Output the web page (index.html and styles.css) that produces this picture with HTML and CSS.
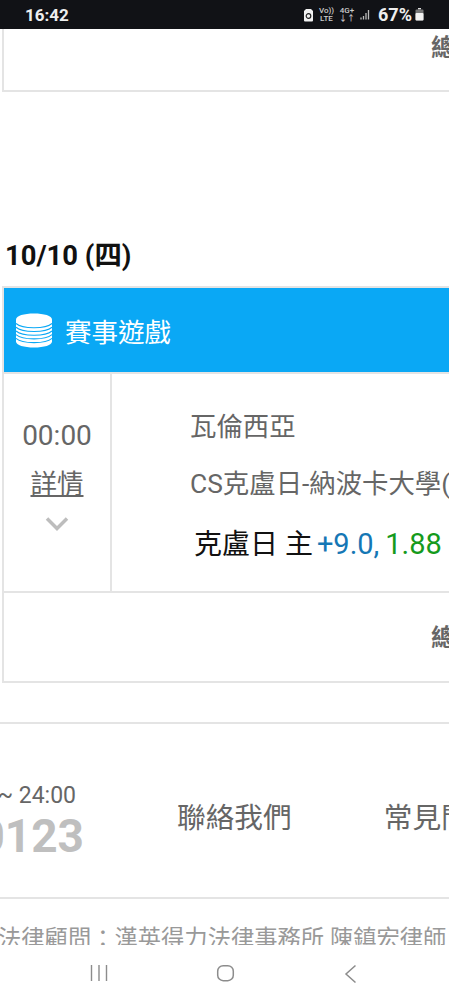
FILE: index.html
```html
<!DOCTYPE html>
<html lang="zh-Hant">
<head>
    <meta charset="UTF-8">
    <meta name="viewport" content="width=device-width, initial-scale=1.0">
    <title>賽事遊戲</title>
    <link rel="stylesheet" href="styles.css">
</head>
<body>
    <div class="phone">
        <div class="status-bar">
            <span class="clock">16:42</span>
            <div class="status-icons">
                <svg class="sim-icon" width="11" height="14" viewBox="0 0 11 14"><path d="M3 1h5l2 2v9.500a1 1 0 0 1-1 1H2a1 1 0 0 1-1-1V3z" fill="#f2f2f2"/><circle cx="5.500" cy="8" r="2.300" fill="none" stroke="#222" stroke-width="1.200"/></svg>
                <span class="net-label">Vo))<br>LTE</span>
                <span class="net-label">4G+<br>↓↑</span>
                <svg class="signal-icon" width="11" height="11" viewBox="0 0 11 11"><path d="M1 8.500v2M3.500 7v3.500M6 4v6.500M8.500 1v9.500" stroke="#bbb" stroke-width="1.300"/></svg>
                <span class="battery-text">67%</span>
                <svg class="battery-icon" width="9" height="13" viewBox="0 0 9 13"><path d="M3 0h3v1.500H3z" fill="#ddd"/><rect x="0.500" y="1.500" width="8" height="11" rx="1" fill="#777"/><rect x="0.500" y="5" width="8" height="7.500" rx="1" fill="#f2f2f2"/></svg>
            </div>
        </div>

        <div class="content">
            <div class="card card-top">
                <div class="summary summary-top">總</div>
            </div>

            <h2 class="date-title">10/10 (四)</h2>

            <div class="card">
                <div class="game-head">
                    <svg class="coins" width="36" height="35" viewBox="0 0 36 35">
                        <path d="M0 6.500C0 2.800 8 .5 18 .5s18 2.300 18 6v22c0 3.700-8 6-18 6s-18-2.300-18-6z" fill="#fff"/>
                        <g fill="none" stroke="#0aa8f5" stroke-width="1.100">
                            <path d="M0 10.500c3 3 10 4.300 18 4.300s15-1.300 18-4.300"/>
                            <path d="M0 14.200c3 3 10 4.300 18 4.300s15-1.300 18-4.300"/>
                            <path d="M0 17.900c3 3 10 4.300 18 4.300s15-1.300 18-4.300"/>
                            <path d="M0 21.600c3 3 10 4.300 18 4.300s15-1.300 18-4.300"/>
                            <path d="M0 25.300c3 3 10 4.300 18 4.300s15-1.300 18-4.300"/>
                        </g>
                    </svg>
                    <span>賽事遊戲</span>
                </div>
                <div class="game-row">
                    <div class="game-time">
                        <div class="time">00:00</div>
                        <a class="detail-link" href="#">詳情</a>
                        <svg class="chevron" width="24" height="15" viewBox="0 0 24 15"><path d="M2 2.500l10 10 10-10" fill="none" stroke="#bdbdbd" stroke-width="3.500"/></svg>
                    </div>
                    <div class="game-info">
                        <div class="league">瓦倫西亞</div>
                        <div class="teams">CS克盧日-納波卡大學(</div>
                        <div class="bet">克盧日 主 <span class="spread">+9.0,</span><span class="odds">1.88</span></div>
                    </div>
                </div>
                <div class="summary">總</div>
            </div>

            <div class="footer-links">
                <div class="service">
                    <div class="hours">~ 24:00</div>
                    <div class="phone-no">0123</div>
                </div>
                <a class="footer-link" href="#">聯絡我們</a>
                <a class="footer-link" href="#">常見問題</a>
            </div>

            <div class="legal">法律顧問：漢英得力法律事務所 陳鎮宏律師</div>
        </div>

        <div class="nav-bar">
            <svg width="18" height="18" viewBox="0 0 18 18"><path d="M1.500 1v16M9 1v16M16.500 1v16" stroke="#8c8c8c" stroke-width="1.400"/></svg>
            <svg width="20" height="18" viewBox="0 0 20 18"><rect x="1.700" y="1.700" width="15.600" height="15" rx="5.500" fill="none" stroke="#8c8c8c" stroke-width="1.500"/></svg>
            <svg width="13" height="20" viewBox="0 0 13 20"><path d="M11.500 1.500L2 10l9.500 8.500" fill="none" stroke="#8c8c8c" stroke-width="1.500"/></svg>
        </div>
    </div>
</body>
</html>
```

FILE: styles.css
```css
* {
    box-sizing: border-box;
}
body {
    margin: 0;
    font-family: Roboto, "Noto Sans CJK TC", sans-serif;
    background-color: #fff;
    color: #666;
}
.phone {
    width: 449px;
    height: 1000px;
    overflow: hidden;
    display: flex;
    flex-direction: column;
}
.status-bar {
    height: 29px;
    flex: none;
    background-color: #111216;
    color: #eee;
    display: flex;
    align-items: center;
    justify-content: space-between;
    padding: 0 25px;
}
.clock {
    font-size: 17px;
    font-weight: 700;
}
.status-icons {
    display: flex;
    align-items: center;
    gap: 5px;
}
.net-label {
    font-size: 8px;
    line-height: 8px;
    font-weight: 500;
    text-align: center;
    color: #ccc;
}
.battery-text {
    margin-left: 2px;
    font-size: 18px;
    font-weight: 700;
}
.battery-icon {
    margin-left: -2px;
}
.content {
    flex: 1;
    min-height: 0;
    overflow: hidden;
}
.card {
    width: 800px;
    margin-left: 2px;
    border: 2px solid #e4e4e4;
    border-right: 0;
}
.card-top {
    height: 63px;
    border-top: 0;
}
.summary {
    height: 88px;
    padding: 27px 0 0 427px;
    font-size: 24px;
    line-height: 36px;
    font-weight: 700;
    color: #666;
}
.summary-top {
    height: 61px;
    padding-top: 1px;
}
.date-title {
    margin: 146px 0 0 5px;
    height: 48px;
    font-size: 27.400px;
    line-height: 36px;
    font-weight: 700;
    color: #111;
}
.game-head {
    height: 84px;
    background-color: #0aa8f5;
    color: #fff;
    display: flex;
    align-items: center;
    gap: 13px;
    padding-left: 12px;
    font-size: 26.500px;
}
.game-row {
    height: 221px;
    display: flex;
    border-top: 2px solid #e4e4e4;
    border-bottom: 2px solid #e4e4e4;
}
.game-time {
    width: 108px;
    border-right: 2px solid #e4e4e4;
    display: flex;
    flex-direction: column;
    align-items: center;
    padding-top: 42px;
}
.time {
    font-size: 28px;
    line-height: 40px;
}
.detail-link {
    margin-top: 8px;
    font-size: 26.500px;
    line-height: 40px;
    color: #666;
}
.chevron {
    margin-top: 12px;
}
.game-info {
    padding: 31px 0 0 78px;
    font-size: 26.400px;
    line-height: 44px;
    white-space: nowrap;
    display: flex;
    flex-direction: column;
    gap: 13px;
}
.bet {
    margin-top: 3px;
    padding-left: 4px;
    font-size: 28px;
    color: #111;
}
.spread {
    font-size: 29px;
    margin-left: -3px;
    margin-right: 6px;
    color: #1577b5;
}
.odds {
    font-size: 29px;
    color: #159a1c;
}
.footer-links {
    margin-top: 39px;
    height: 177px;
    padding-top: 10px;
    border-top: 2px solid #e4e4e4;
    border-bottom: 2px solid #e4e4e4;
    display: flex;
    align-items: center;
    white-space: nowrap;
}
.service {
    width: 84px;
    flex: none;
    display: flex;
    flex-direction: column;
    align-items: flex-end;
    margin-top: 10px;
    margin-right: 93px;
}
.hours {
    padding-right: 8px;
    font-size: 23px;
    line-height: 30px;
    color: #666;
}
.phone-no {
    font-size: 46px;
    line-height: 50px;
    font-weight: 700;
    color: #bfbfbf;
}
.footer-link {
    font-size: 28.700px;
    color: #666;
    text-decoration: none;
    margin-right: 92px;
}
.legal {
    margin: 23px 0 0 -2px;
    font-size: 23.300px;
    line-height: 34px;
    white-space: nowrap;
    color: #999;
}
.nav-bar {
    height: 55px;
    flex: none;
    background-color: #fff;
    display: flex;
    align-items: flex-start;
    padding: 19px 92px 0 90px;
    justify-content: space-between;
}
```
